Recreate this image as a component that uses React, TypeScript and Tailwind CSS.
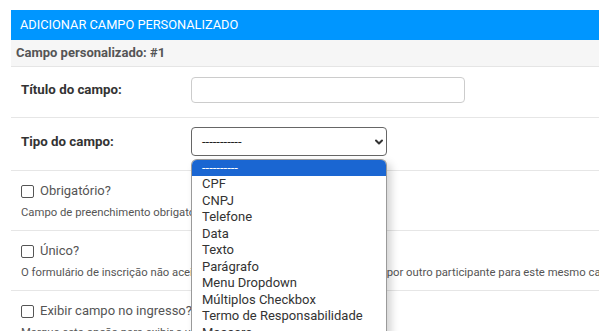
import { ChevronDown } from "lucide-react";

const fieldTypes = [
  "CPF",
  "CNPJ",
  "Telefone",
  "Data",
  "Texto",
  "Parágrafo",
  "Menu Dropdown",
  "Múltiplos Checkbox",
  "Termo de Responsabilidade",
  "Mascara",
];

type CheckRowProps = {
  label: string;
  help: string;
};

function CheckRow({ label, help }: CheckRowProps) {
  return (
    <div className="border-b border-[#e6e6e6] pl-[10px] pt-[10px] pb-[9px]">
      <label className="flex h-[20px] items-center gap-[6px] text-[13px] text-[#555]">
        <span className="inline-block h-[13px] w-[13px] rounded-[2px] border border-[#555] bg-white" />
        {label}
      </label>
      <p className="mt-[4px] whitespace-nowrap text-[11.3px] leading-[16px] text-[#555]">
        {help}
      </p>
    </div>
  );
}

export default function App() {
  return (
    <div
      className="h-[331px] w-[599px] overflow-hidden bg-white pt-[10px] pl-[11px]"
      style={{ fontFamily: "Roboto, 'Liberation Sans', sans-serif" }}
    >
      <div className="relative w-[640px]">
        <div className="flex h-[30px] items-center bg-[#0096ff] pl-[9px] text-[12.8px] text-white">
          ADICIONAR CAMPO PERSONALIZADO
        </div>
        <div className="flex h-[27px] items-center border-b border-[#e5e5e5] bg-[#f6f6f6] pl-[5px] text-[13px] font-bold text-[#555]">
          Campo personalizado: #1
        </div>

        <div className="flex items-center border-b border-[#e6e6e6] pt-[10px] pb-[14px] pl-[10px]">
          <span className="w-[170px] text-[13.3px] font-bold text-[#333]">
            Título do campo:
          </span>
          <div className="h-[26px] w-[274px] rounded-[4px] border border-[#ccc] bg-white" />
        </div>

        <div className="flex items-center border-b border-[#e6e6e6] pt-[9px] pb-[14px] pl-[10px]">
          <span className="w-[170px] text-[13.3px] font-bold text-[#333]">
            Tipo do campo:
          </span>
          <div className="flex h-[29px] w-[196px] items-center justify-between rounded-[4px] border border-[#666] bg-white pr-[1px] pl-[10px] text-[13px] text-[#222]">
            <span>-----------</span>
            <ChevronDown size={12} strokeWidth={4} className="text-[#333]" />
          </div>
        </div>

        <CheckRow
          label="Obrigatório?"
          help="Campo de preenchimento obrigatório para o participante."
        />
        <CheckRow
          label="Único?"
          help="O formulário de inscrição não aceitará os valores que já foram utilizados por outro participante para este mesmo campo."
        />
        <CheckRow
          label="Exibir campo no ingresso?"
          help="Marque esta opção para exibir o valor deste campo no ingresso."
        />

        <ul className="absolute top-[149px] left-[180px] w-[196px] overflow-hidden rounded-t-[6px] border-x border-t border-[#9a9a9a] bg-white text-[13px] text-[#333] shadow-[4px_4px_8px_rgba(0,0,0,0.18)]">
          <li className="h-[16px] bg-[#1a66d2] pl-[10px] leading-[15px] text-white">
            ----------
          </li>
          {fieldTypes.map((type) => (
            <li key={type} className="h-[16.5px] pl-[10px] leading-[16.5px]">
              {type}
            </li>
          ))}
        </ul>
      </div>
    </div>
  );
}
